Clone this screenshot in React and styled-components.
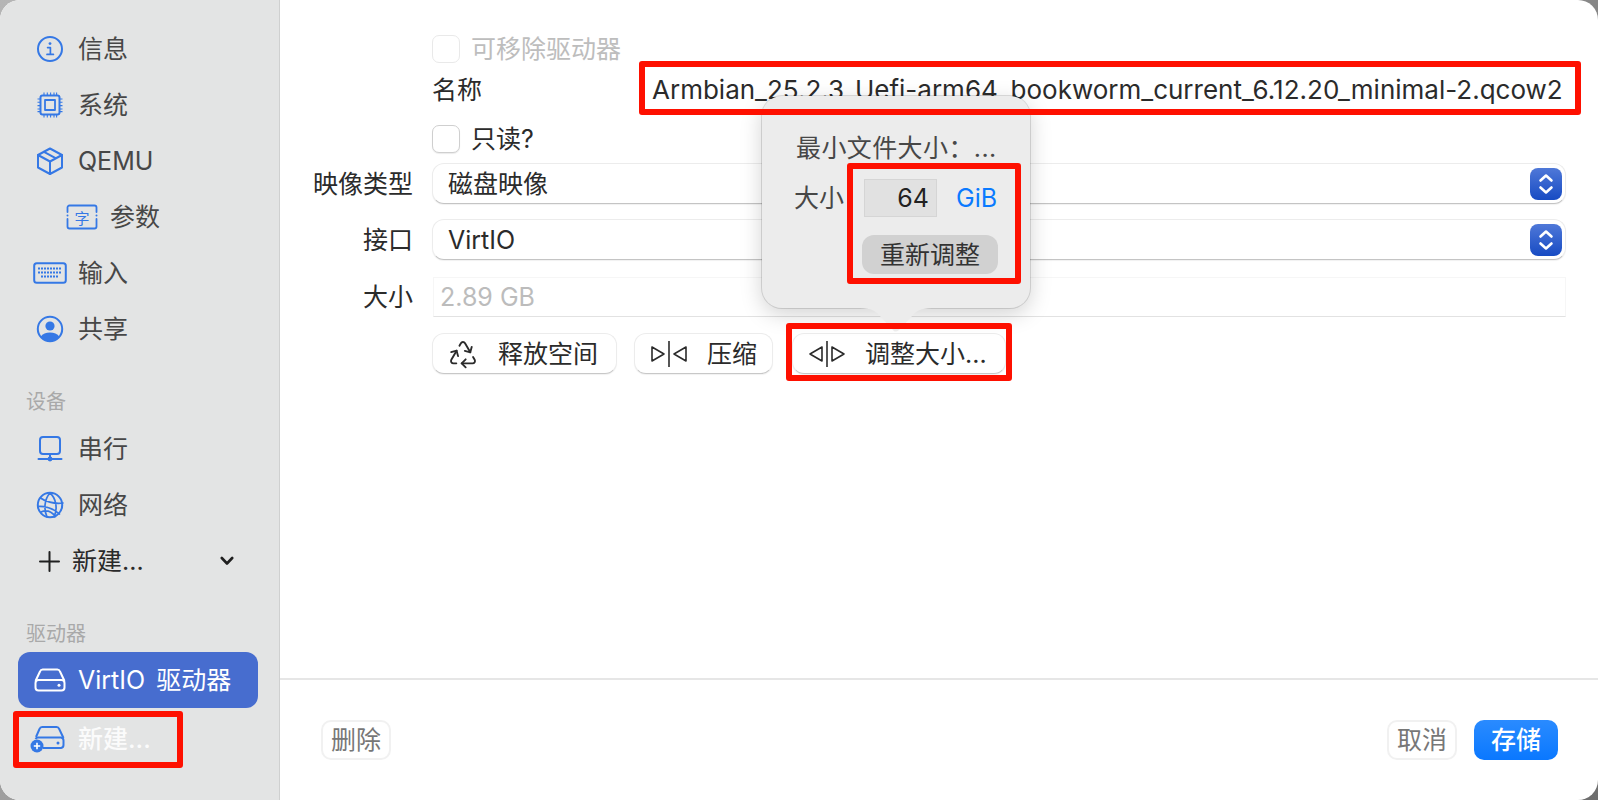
import React from 'react';
import styled, { createGlobalStyle } from 'styled-components';
import { Recycle } from 'lucide-react';

const Global = createGlobalStyle`
  html, body { margin: 0; padding: 0; height: 100%; overflow: hidden; }
  body { background: linear-gradient(135deg, #b5b5b5 0%, #8c8c8c 60%, #6e6e6e 100%); font-family: Inter, "Noto Sans CJK SC", sans-serif; }
  * { box-sizing: border-box; }
`;

const Win = styled.div`
  width: 1598px; height: 800px; display: flex; border-radius: 20px; overflow: hidden; background: #fff;
  font-size: 25px; color: #2b2b2b; line-height: 1.2;
`;
const Side = styled.aside`
  width: 280px; flex: none; background: #e3e4e4; border-right: 1px solid #cfd0d0; padding: 21px 0 0;
  display: flex; flex-direction: column; color: #474747;
`;
const Row = styled.div`
  height: 56px; display: flex; align-items: center; margin: 0 18px; gap: 10px;
  padding-left: ${p => (p.$sub ? 46 : 14)}px;
`;
const IconSlot = styled.span`
  width: 36px; height: 36px; flex: none; display: flex; align-items: center; justify-content: center;
`;
const Section = styled.div`
  height: 32px; margin: ${p => p.$mt}px 0 ${p => p.$mb}px 26px; font-size: 20px; color: #a9a9a9;
  display: flex; align-items: center;
`;
const AddRow = styled.div`
  height: 56px; display: flex; align-items: center; padding-left: 39px; color: #2a2a2a;
`;
const AddLabel = styled.span`margin-left: 12px; flex: 1;`;
const Chevron = styled.svg`margin-right: 45px;`;
const ActiveRow = styled(Row)`
  background: #476dcf; color: #fff; border-radius: 12px; width: 240px; word-spacing: 4px;
`;
const NewDrive = styled.div`
  position: relative; margin: 9px 0 0 19px; width: 158px; height: 45px; display: flex; align-items: center;
  color: #fbfbfb; padding: 0 0 2px 11px; gap: 12px; font-weight: 500;
  &::after { content: ""; position: absolute; inset: -6px; border: 6px solid #fe1000; border-radius: 3px; }
`;

const Main = styled.main`
  position: relative; flex: 1; display: flex; flex-direction: column; min-width: 0;
`;
const Form = styled.div`
  flex: 1; padding: 35px 32px 0 33px; display: flex; flex-direction: column;
`;
const FormRow = styled.div`
  display: grid; grid-template-columns: 100px 1fr; column-gap: 19px; align-items: center; margin-top: ${p => p.$mt || 0}px;
`;
const RowLabel = styled.div`text-align: right; white-space: nowrap;`;
const CheckLine = styled.div`
  display: flex; align-items: center; gap: 11px; height: 28px; color: ${p => (p.$off ? '#bdbdbd' : '#2b2b2b')};
`;
const Check = styled.span`
  width: 28px; height: 28px; border-radius: 7px; background: #fff; flex: none;
  border: 1px solid ${p => (p.$off ? '#e9e9e9' : '#cfcfcf')};
  box-shadow: ${p => (p.$off ? 'none' : '0 1px 1px rgba(0,0,0,.08)')};
`;
const NameLine = styled.div`display: flex; align-items: center; height: 42px;`;
const NameLabel = styled.span`width: 213px; flex: none; margin-top: 4px;`;
const NameValue = styled.div`
  flex: 1; height: 42px; margin-right: -9px; padding: 4px 0 0 7px; display: flex; align-items: center; white-space: nowrap;
  position: relative; font-size: 26px;
  &::after { content: ""; position: absolute; inset: -6px; border: 6px solid #fe1000; border-radius: 3px; z-index: 3; }
`;
const Select = styled.div`
  height: 41px; border-radius: 12px; background: #fff; border: 1px solid #ececec; border-bottom: 1px solid #c4c4c4;
  box-shadow: 0 1px 1px rgba(0,0,0,.06); display: flex; align-items: center; justify-content: space-between;
  padding: 0 3px 0 15px;
`;
const Stepper = styled.span`
  width: 32px; height: 32px; border-radius: 8px; background: linear-gradient(#4f78d8, #174bc3);
  display: flex; align-items: center; justify-content: center;
`;
const SizeField = styled.div`
  height: 40px; margin-left: 1px; border: 1px solid #f6f6f6; border-bottom: 1px solid #e2e2e2; color: #bcbcbc; padding-left: 6px;
  display: flex; align-items: center;
`;
const Buttons = styled.div`display: flex; align-items: center;`;
const ActBtn = styled.div`
  position: relative; height: 41px; display: flex; align-items: center; gap: 19px; background: #fff; white-space: nowrap;
  border-radius: 12px; border: 1px solid #ececec; border-bottom: 1px solid #c8c8c8; box-shadow: 0 1px 1px rgba(0,0,0,.06);
  margin-left: ${p => p.$ml || 0}px; padding: 0 ${p => p.$pr}px 0 ${p => p.$pl}px;
`;
const ResizeBtn = styled(ActBtn)`
  &::after { content: ""; position: absolute; inset: -11px -7px -8px -7px; border: 6px solid #fe1000; border-radius: 3px; z-index: 3; }
`;
const Footer = styled.footer`
  height: 122px; flex: none; border-top: 2px solid #e6e6e6; display: flex; align-items: flex-start; padding: 40px 40px 0 41px;
`;
const FootBtn = styled.div`
  height: 40px; width: ${p => p.$w}px; border-radius: 10px; display: flex; align-items: center; justify-content: center;
  border: 2px solid #f1f1f1; color: #777; background: #fff;
`;
const Spacer = styled.div`flex: 1;`;
const SaveBtn = styled.div`
  height: 40px; width: 84px; margin-left: 17px; border-radius: 10px; display: flex; align-items: center; justify-content: center;
  background: linear-gradient(#2a8bff, #0a78ff); color: #fff; font-weight: 500;
`;

const Popover = styled.div`
  position: absolute; left: 482px; top: 96px; width: 268px; height: 212px; z-index: 2; background: #ececec;
  border-radius: 20px; box-shadow: 0 0 0 1px rgba(0,0,0,.12), 0 6px 22px rgba(0,0,0,.18); color: #474747;
`;
const PopTip = styled.svg`position: absolute; left: 94px; top: 210px;`;
const PopTitle = styled.div`margin: 36px 0 5px 34px; height: 32px; display: flex; align-items: center; white-space: nowrap; letter-spacing: .4px;`;
const PopRow = styled.div`display: flex; align-items: flex-start; padding-left: 32px;`;
const PopLabel = styled.span`height: 58px; display: flex; align-items: center; width: 59px; flex: none;`;
const Controls = styled.div`
  position: relative; width: 162px; height: 109px; padding: 10px 0 0 11px;
  &::after { content: ""; position: absolute; inset: -6px; border: 6px solid #fe1000; border-radius: 3px; }
`;
const Line = styled.div`display: flex; align-items: center;`;
const NumBox = styled.div`
  width: 73px; height: 38px; background: #e1e1e1; border: 1px solid #d5d5d5; color: #222; text-align: right; padding-right: 7px; line-height: 37px;
`;
const Unit = styled.span`margin-left: 19px; color: #0a7aff;`;
const ReBtn = styled.div`
  width: 136px; height: 39px; margin: 18px 0 0 -2px; border-radius: 12px; background: #d1d1d1; color: #333;
  display: flex; align-items: center; justify-content: center;
`;

const B = '#3578e5';
const Ico = ({ w = 28, h = 28, children, c = B, sw = 2 }) => (
  <svg width={w} height={h} viewBox={`0 0 ${w} ${h}`} fill="none" stroke={c} strokeWidth={sw} strokeLinecap="round" strokeLinejoin="round">{children}</svg>
);
const InfoI = () => (
  <Ico>
    <circle cx="14" cy="14" r="12" />
    <circle cx="14" cy="8.6" r="1.4" fill={B} stroke="none" />
    <path d="M11.6 12.6H14.4V19.2M11 19.4H17.4" strokeWidth="1.7" />
  </Ico>
);
const ChipI = () => (
  <Ico>
    <rect x="4.5" y="4.5" width="19" height="19" rx="2" />
    <rect x="9" y="9" width="10" height="10" strokeWidth="1.8" />
    <path d="M8 1.5V4M11.3 1.5V4M14.6 1.5V4M18 1.5V4M20.6 1.5V4M8 24V26.5M11.3 24V26.5M14.6 24V26.5M18 24V26.5M20.6 24V26.5M1.5 8H4M1.5 11.3H4M1.5 14.6H4M1.5 18H4M1.5 20.6H4M24 8H26.5M24 11.3H26.5M24 14.6H26.5M24 18H26.5M24 20.6H26.5" strokeWidth="1.1" strokeLinecap="butt" />
  </Ico>
);
const BoxI = () => (
  <Ico>
    <path d="M14 1.5L26 8V20.5L14 27L2 20.5V8Z" />
    <path d="M2 8L14 14.5L26 8M14 14.5V27M8 4.8L20 11.3" />
  </Ico>
);
const ArgI = () => (
  <svg width="32" height="26" viewBox="0 0 32 26" fill="none" stroke={B} strokeWidth="1.8" strokeLinecap="round">
    <path d="M1.5 8V3.5A2 2 0 0 1 3.5 1.5H28.5A2 2 0 0 1 30.5 3.5V8M1.5 15V22.5A2 2 0 0 0 3.5 24.5H28.5A2 2 0 0 0 30.5 22.5V15" />
    <circle cx="1.5" cy="11.5" r="1" fill={B} stroke="none" />
    <circle cx="30.5" cy="11.5" r="1" fill={B} stroke="none" />
    <text x="16" y="19.5" textAnchor="middle" fontSize="15" fill={B} stroke="none" fontFamily="'Noto Sans CJK SC', sans-serif">字</text>
  </svg>
);
const KeyI = () => (
  <svg width="34" height="22" viewBox="0 0 34 22" fill="none">
    <rect x="1.2" y="1.2" width="31.6" height="19.6" rx="2.5" stroke={B} strokeWidth="2" />
    <path d="M5 6.5H29M5 10.5H29M8 14.5H26" stroke={B} strokeWidth="2" strokeDasharray="2 1" />
  </svg>
);
const UserI = () => (
  <svg width="28" height="28" viewBox="0 0 28 28" fill="none">
    <circle cx="14" cy="14" r="12.2" stroke={B} strokeWidth="2" />
    <circle cx="14" cy="11" r="4.6" fill={B} />
    <path d="M4.6 21.8C6.6 18.6 10 17.6 14 17.6S21.4 18.6 23.4 21.8A12.2 12.2 0 0 1 4.6 21.8Z" fill={B} />
  </svg>
);
const SerialI = () => (
  <Ico w={26} h={28}>
    <rect x="3" y="2" width="20" height="17" rx="3" />
    <path d="M13 19V24M1.5 24H24.5" />
    <circle cx="13" cy="24" r="2.4" fill={B} stroke="none" />
  </Ico>
);
const GlobeI = () => (
  <Ico sw={1.7}>
    <circle cx="14" cy="14" r="12.2" strokeWidth="2" />
    <path d="M4.5 7C8.5 10 18 13.5 27 12M2 15.5C8 15 17 17 23.5 23M14 2C8.5 8 7.5 18 11 26M14 2C20 7 22 18 18 26M5 21C9.5 19 15 20 19.5 25.5" />
  </Ico>
);
const DrivePath = ({ c }) => (
  <svg width="32" height="24" viewBox="0 0 32 24" fill="none" stroke={c} strokeWidth="2" strokeLinejoin="round">
    <path d="M1.5 13L6 3.5A3 3 0 0 1 8.7 1.6H23.3A3 3 0 0 1 26 3.5L30.5 13" />
    <rect x="1.5" y="12" width="29" height="10.5" rx="3" />
    <circle cx="25" cy="17.2" r="1.5" fill={c} stroke="none" />
  </svg>
);
const NewDriveI = () => (
  <svg width="36" height="28" viewBox="0 0 36 28" fill="none" stroke={B} strokeWidth="2" strokeLinejoin="round">
    <path d="M6 12L9.5 4A3 3 0 0 1 12.2 2H26.5A3 3 0 0 1 29.2 4L33.5 13" />
    <path d="M13 23H31A3 3 0 0 0 33.5 20V15.5A3 3 0 0 0 31 12.5H8A3 3 0 0 0 5.5 14" />
    <circle cx="28" cy="18" r="1.5" fill={B} stroke="none" />
    <circle cx="7" cy="21" r="6.5" fill={B} stroke="none" />
    <path d="M3.8 21H10.2M7 17.8V24.2" stroke="#fff" strokeWidth="1.6" />
  </svg>
);
const StepArrows = () => (
  <svg width="20" height="24" viewBox="0 0 20 24" fill="none" stroke="#fff" strokeWidth="2.6" strokeLinecap="round" strokeLinejoin="round">
    <path d="M4.5 8.5L10 3.5L15.5 8.5M4.5 15.5L10 20.5L15.5 15.5" />
  </svg>
);
const Squeeze = ({ out }) => (
  <svg width="38" height="28" viewBox="0 0 38 28" fill="none" stroke="#2b2b2b" strokeWidth="1.6" strokeLinejoin="round">
    {out ? <path d="M14 7V21L2 14ZM24 7V21L36 14Z" /> : <path d="M2 7V21L14 14ZM36 7V21L24 14Z" />}
    <path d="M19 1V27" />
  </svg>
);

export default function App() {
  return (
    <>
      <Global />
      <Win>
        <Side>
          <Row><IconSlot><InfoI /></IconSlot>信息</Row>
          <Row><IconSlot><ChipI /></IconSlot>系统</Row>
          <Row><IconSlot><BoxI /></IconSlot>QEMU</Row>
          <Row $sub><IconSlot><ArgI /></IconSlot>参数</Row>
          <Row><IconSlot><KeyI /></IconSlot>输入</Row>
          <Row><IconSlot><UserI /></IconSlot>共享</Row>
          <Section $mt={29} $mb={3}>设备</Section>
          <Row><IconSlot><SerialI /></IconSlot>串行</Row>
          <Row><IconSlot><GlobeI /></IconSlot>网络</Row>
          <AddRow>
            <svg width="21" height="21" viewBox="0 0 21 21" stroke="#1f1f1f" strokeWidth="2" strokeLinecap="round"><path d="M1 10.5H20M10.5 1V20" /></svg>
            <AddLabel>新建...</AddLabel>
            <Chevron width="14" height="10" viewBox="0 0 14 10" fill="none" stroke="#1f1f1f" strokeWidth="2.6" strokeLinecap="round" strokeLinejoin="round"><path d="M1.8 2L7 7.5L12.2 2" /></Chevron>
          </AddRow>
          <Section $mt={29} $mb={2}>驱动器</Section>
          <ActiveRow><IconSlot><DrivePath c="#fff" /></IconSlot>VirtIO 驱动器</ActiveRow>
          <NewDrive><IconSlot><NewDriveI /></IconSlot><span>新建...</span></NewDrive>
        </Side>
        <Main>
          <Form>
            <FormRow>
              <span />
              <CheckLine $off><Check $off />可移除驱动器</CheckLine>
            </FormRow>
            <FormRow $mt={4}>
              <span />
              <NameLine>
                <NameLabel>名称</NameLabel>
                <NameValue>Armbian_25.2.3_Uefi-arm64_bookworm_current_6.12.20_minimal-2.qcow2</NameValue>
              </NameLine>
            </FormRow>
            <FormRow $mt={16}>
              <span />
              <CheckLine><Check />只读?</CheckLine>
            </FormRow>
            <FormRow $mt={10}>
              <RowLabel>映像类型</RowLabel>
              <Select>磁盘映像<Stepper><StepArrows /></Stepper></Select>
            </FormRow>
            <FormRow $mt={15}>
              <RowLabel>接口</RowLabel>
              <Select>VirtIO<Stepper><StepArrows /></Stepper></Select>
            </FormRow>
            <FormRow $mt={17}>
              <RowLabel>大小</RowLabel>
              <SizeField>2.89 GB</SizeField>
            </FormRow>
            <FormRow $mt={16}>
              <span />
              <Buttons>
                <ActBtn $pl={14} $pr={18}><Recycle size={32} strokeWidth={1.4} color="#2b2b2b" />释放空间</ActBtn>
                <ActBtn $ml={17} $pl={15} $pr={15}><Squeeze />压缩</ActBtn>
                <ResizeBtn $ml={19} $pl={15} $pr={18}><Squeeze out />调整大小...</ResizeBtn>
              </Buttons>
            </FormRow>
          </Form>
          <Popover>
            <PopTitle>最小文件大小：...</PopTitle>
            <PopRow>
              <PopLabel>大小</PopLabel>
              <Controls>
                <Line><NumBox>64</NumBox><Unit>GiB</Unit></Line>
                <ReBtn>重新调整</ReBtn>
              </Controls>
            </PopRow>
            <PopTip width="80" height="26" viewBox="0 0 80 26" fill="#ececec">
              <path d="M0 0H80V2C68 2 62 3 57 9L43 24Q39 27 37 24L23 9C18 3 12 2 0 2Z" />
            </PopTip>
          </Popover>
          <Footer>
            <FootBtn $w={70}>删除</FootBtn>
            <Spacer />
            <FootBtn $w={70}>取消</FootBtn>
            <SaveBtn>存储</SaveBtn>
          </Footer>
        </Main>
      </Win>
    </>
  );
}
